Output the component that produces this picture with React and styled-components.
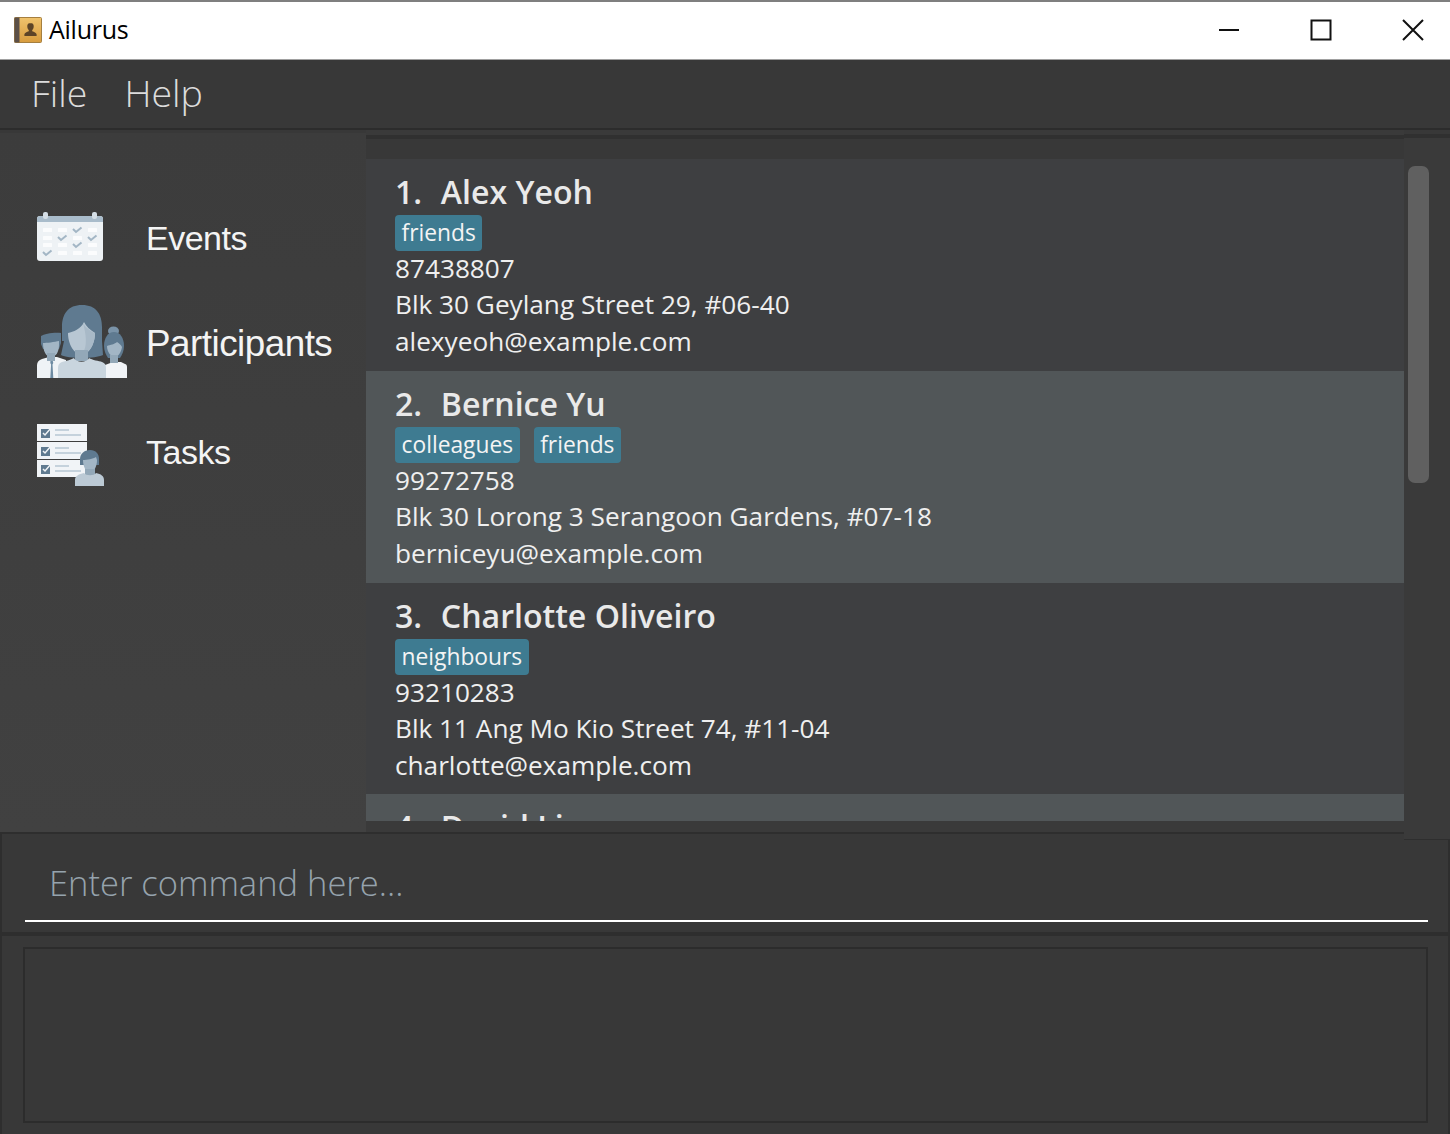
import React from "react";
import styled, { createGlobalStyle } from "styled-components";

const Global = createGlobalStyle`
  html, body { margin: 0; padding: 0; background: #383838; }
  * { box-sizing: border-box; }
`;
const Win = styled.div`
  width: 1450px; height: 1134px; display: flex; flex-direction: column; overflow: hidden;
  background: #383838; font-family: "Open Sans", sans-serif;
`;
const TitleBar = styled.div`
  height: 60px; flex: none; background: #fff; border-top: 2px solid #7f7f7f; border-bottom: 1px solid #a0a0a0;
  display: flex; align-items: center; padding: 0 26px 1px 14px; gap: 70px;
`;
const AppName = styled.div`
  font-size: 25px; color: #000; margin-left: -63px; flex: 1; letter-spacing: -.25px; padding-bottom: 2px;
`;
const WinBtn = styled.div`
  width: 22px; height: 100%; display: flex; align-items: center; justify-content: center;
`;
const MenuBar = styled.div`
  height: 70px; flex: none; background: #383838; border-bottom: 2px solid #2c2c2c;
  display: flex; align-items: center; gap: 37px; padding: 0 0 3px 31px;
`;
const MenuItem = styled.div`
  color: #dcdcdc; font-size: 37.5px; font-weight: 300;
`;
const Main = styled.div`
  flex: none; height: 702px; display: flex; background: #383838;
`;
const Sidebar = styled.div`
  width: 366px; flex: none; background: linear-gradient(#3c3c3c, #414141); margin-top: 3px;
  padding: 51px 0 0 36px; display: flex; flex-direction: column;
`;
const NavItem = styled.div`
  height: ${p => p.$h}px; display: flex; align-items: center;
  & > svg { flex: none; }
`;
const NavLabel = styled.div`
  margin-left: ${p => p.$x}px; padding-top: 4px;
  font-family: "Liberation Sans", Arial, sans-serif; font-size: ${p => p.$size}px; color: #f4f4f4; letter-spacing: -.5px;
`;
const ListPanel = styled.div`
  flex: 1; min-width: 0; display: flex; flex-direction: column; padding-bottom: 11px;
  background: #3a3a3a;
`;
const ListTop = styled.div`
  height: 24px; flex: none; background: #383838; border-top: 4px solid #303030; margin-top: 5px;
`;
const List = styled.div`
  flex: 1; min-height: 0; overflow: hidden;
`;
const Card = styled.div`
  height: ${p => p.$h}px; padding: 11px 0 0 29px; background: ${p => p.$alt ? "#515658" : "#3e3f41"};
  color: #efefef; overflow: hidden;
`;
const Name = styled.div`
  font-size: 32.1px; font-weight: 600; line-height: 44px; color: #e9e9e9; white-space: pre; margin-bottom: 1px;
`;
const Index = styled.span`
  margin-right: 2px;
`;
const Tags = styled.div`
  display: flex; gap: 14px; height: 36px; margin-bottom: -1px;
`;
const Tag = styled.span`
  background: #3e7b91; color: #f4f4f4; font-size: 22.8px; border-radius: 4px;
  padding: 0 6.5px; height: 36px; line-height: 35px;
`;
const Detail = styled.div`
  font-size: 26.2px; line-height: 36.3px; color: #efefef; white-space: pre;
`;
const Track = styled.div`
  width: 46px; flex: none; background: #3a3a3a; border-top: 4px solid #303030; margin: 4px 0 -8px; padding: 28px 0 0 4px;
  border-bottom: 1px solid #2e2e2e; position: relative; z-index: 2;
`;
const Thumb = styled.div`
  width: 21px; height: 317px; border-radius: 7px; background: #606060;
`;
const CommandBox = styled.div`
  height: 104px; flex: none; background: #383838; border-top: 2px solid #2e2e2e; border-bottom: 4px solid #2e2e2e;
  border-left: 2px solid #2e2e2e; border-right: 2px solid #2e2e2e;
  padding: 0 20px 0 23px;
`;
const Command = styled.div`
  height: 88px; border-bottom: 2px solid #fff;
  color: #96a3ad; font-size: 34.5px; font-weight: 300; padding: 27px 0 0 24px; line-height: 44px;
`;
const ResultWrap = styled.div`
  flex: 1; min-height: 0; padding: 11px 20px 11px 21px; border-left: 2px solid #2e2e2e; border-right: 2px solid #2e2e2e;
`;
const Result = styled.div`
  height: 100%; border: 2px solid #2c2c2c; background: #383838;
`;

const BookIcon = () => (
  <svg width="28" height="27" viewBox="0 0 28 27">
    <defs>
      <linearGradient id="cover" x1="0" y1="0" x2="0" y2="1">
        <stop offset="0" stopColor="#f0c36d" />
        <stop offset="1" stopColor="#d89c3e" />
      </linearGradient>
    </defs>
    <rect x="0.5" y="0.5" width="27" height="25" rx="1" fill="url(#cover)" stroke="#a57f3f" />
    <rect x="0.5" y="0.5" width="5" height="25" fill="#5c5048" />
    <path d="M16.5 6c-2.4 0-3.4 1.7-3.2 3.7.1 1.4.7 2.6 1.5 3.2v1.3c-2 .8-4 1.3-4.4 3v1.8h12.2v-1.8c-.4-1.7-2.4-2.2-4.4-3v-1.3c.8-.6 1.4-1.8 1.5-3.2.2-2-.8-3.7-3.2-3.7Z" fill="#5d4427" />
  </svg>
);
const Minimize = () => <svg width="22" height="4" viewBox="0 0 22 4"><path d="M1 2h20" stroke="#111" strokeWidth="2" /></svg>;
const Maximize = () => <svg width="22" height="22" viewBox="0 0 22 22"><rect x="1.5" y="1.5" width="19" height="19" fill="none" stroke="#111" strokeWidth="2" /></svg>;
const CloseIcon = () => <svg width="22" height="22" viewBox="0 0 22 22"><path d="M1 1l20 20M21 1L1 21" stroke="#111" strokeWidth="2" /></svg>;

const CalIcon = () => {
  const cols = [7, 22, 37, 52];
  const rows = [16, 24, 31, 39];
  const checks = [[2, 0], [1, 1], [3, 1], [2, 2], [0, 3]];
  return (
    <svg width="68" height="50" viewBox="0 0 68 50">
      <rect x="1" y="4" width="66" height="45" rx="3" fill="#eef2f5" />
      <path d="M1 10V7a3 3 0 0 1 3-3h60a3 3 0 0 1 3 3v3Z" fill="#a9bccb" />
      <rect x="7" y="0" width="5" height="7" rx="2" fill="#d5dfe7" />
      <rect x="56" y="0" width="5" height="7" rx="2" fill="#d5dfe7" />
      {rows.map((y, r) => cols.map((x, c) =>
        checks.some(k => k[0] === c && k[1] === r)
          ? <path key={`${r}${c}`} d={`M${x} ${y + 1}l3 3 5.5-4.5`} fill="none" stroke="#a3b6c5" strokeWidth="2" />
          : <rect key={`${r}${c}`} x={x} y={y} width="9" height="4" rx="0.5" fill="#fbfcfd" />
      ))}
    </svg>
  );
};
const PeopleIcon = () => (
  <svg width="92" height="74" viewBox="0 0 92 74">
    <path d="M1 60c0-3 2-5 5-6l7-2h8l9 3v18H1Z" fill="#eff3f6" />
    <path d="M14.500 55h2l.8 3-.8 1.500.8 13.500h-3l.8-13.500-.8-1.500Z" fill="#6d8ba2" />
    <path d="M5 31c3-2 13-4 20-3v10l-2 6H7l-2-5Z" fill="#5f7a90" />
    <path d="M7 38c3 0 12-1 16-2v4c0 7-3 12-8 12s-8-6-8-14Z" fill="#a3b6c5" />
    <path d="M11 48h8v8h-8Z" fill="#93a8b8" />
    <path d="M69 60l8-3h8l4 2c1 0 2 1 2 3v11H69Z" fill="#f1f4f7" />
    <ellipse cx="77.500" cy="26" rx="5.500" ry="4.500" fill="#7a93a8" />
    <path d="M68 41c0-8 4-14 10-14s10 6 10 14c0 5-2 9-4 12H72c-2-3-4-7-4-12Z" fill="#5f7a90" />
    <path d="M71 41c3-1 8-2 10-4 2 1 4 3 5 5-1 6-4 10-7.500 10S71 47 71 41Z" fill="#a3b6c5" />
    <path d="M74 50h8v8h-8Z" fill="#93a8b8" />
    <path d="M46 0c14 0 20 9 20 22v14l1 14c-5 2-11 3-21 3s-17-1-21-3l3-14 -2 0 0-14C26 9 32 0 46 0Z" fill="#5f7a90" />
    <path d="M32 28c5-1 13-4 16-11 2 4 6 8 11 11 0 10-5 21-13.500 21S32 38 32 28Z" fill="#b8c7d3" />
    <path d="M47 18c2 4 7 8 12 10 0 10-5 21-13 21 6-7 4-20 1-31Z" fill="#a8b9c7" />
    <path d="M39 45h13v11H39Z" fill="#93a8b8" />
    <path d="M38 53c-3 2-9 3-12 4-3 1-4 3-4 6v10h48v-10c0-3-1-5-4-6-3-1-10-2-13-4-2 5-13 5-15 0Z" fill="#c9d5de" />
  </svg>
);
const TaskRow = ({ y }) => (
  <g>
    <rect x="1" y={y} width="50" height="17" fill="#f1f4f7" />
    <rect x="5" y={y + 5} width="9" height="9" fill="#5f7a90" />
    <path d={`M7 ${y + 9}l2 2 6-7`} stroke="#f1f4f7" strokeWidth="1.500" fill="none" />
    <rect x="19" y={y + 5} width="14" height="2" fill="#c5d2dc" />
    <rect x="19" y={y + 10} width="26" height="2" fill="#c5d2dc" />
  </g>
);
const TasksIcon = () => (
  <svg width="68" height="72" viewBox="0 -10 68 72">
    <TaskRow y={0} />
    <TaskRow y={18} />
    <TaskRow y={36} />
    <path d="M54 26c6 0 9 4 9 9v6H44v-6c0-5 4-9 10-9Z" fill="#5f7a90" />
    <path d="M47 36c4 0 10-1 13-3l1 3c0 7-3 12-7 12s-7-5-7-12Z" fill="#a3b6c5" />
    <path d="M49 45h10v7H49Z" fill="#93a8b8" />
    <path d="M48 49c2 3 10 3 12 0 5 1 8 3 8 7v6H39v-6c0-4 4-6 9-7Z" fill="#bccad5" />
  </svg>
);

const people = [
  { no: "1.", name: "Alex Yeoh", tags: ["friends"], phone: "87438807", addr: "Blk 30 Geylang Street 29, #06-40", email: "alexyeoh@example.com", h: 212 },
  { no: "2.", name: "Bernice Yu", tags: ["colleagues", "friends"], phone: "99272758", addr: "Blk 30 Lorong 3 Serangoon Gardens, #07-18", email: "berniceyu@example.com", h: 212, alt: true },
  { no: "3.", name: "Charlotte Oliveiro", tags: ["neighbours"], phone: "93210283", addr: "Blk 11 Ang Mo Kio Street 74, #11-04", email: "charlotte@example.com", h: 211 },
  { no: "4.", name: "David Li", tags: [], phone: "", addr: "", email: "", h: 212, alt: true },
];

export default function App() {
  return (
    <Win>
      <Global />
      <TitleBar>
        <BookIcon />
        <AppName>Ailurus</AppName>
        <WinBtn><Minimize /></WinBtn>
        <WinBtn><Maximize /></WinBtn>
        <WinBtn><CloseIcon /></WinBtn>
      </TitleBar>
      <MenuBar>
        <MenuItem>File</MenuItem>
        <MenuItem>Help</MenuItem>
      </MenuBar>
      <Main>
        <Sidebar>
          <NavItem $h={105}><CalIcon /><NavLabel $x={42} $size={34}>Events</NavLabel></NavItem>
          <NavItem $h={105}><PeopleIcon /><NavLabel $x={18} $size={36.8}>Participants</NavLabel></NavItem>
          <NavItem $h={112}><TasksIcon /><NavLabel $x={42} $size={34}>Tasks</NavLabel></NavItem>
        </Sidebar>
        <ListPanel>
          <ListTop />
          <List>
            {people.map(p => (
              <Card key={p.no} $h={p.h} $alt={p.alt}>
                <Name><Index>{p.no}  </Index>{p.name}</Name>
                <Tags>{p.tags.map(t => <Tag key={t}>{t}</Tag>)}</Tags>
                <Detail>{p.phone}</Detail>
                <Detail>{p.addr}</Detail>
                <Detail>{p.email}</Detail>
              </Card>
            ))}
          </List>
        </ListPanel>
        <Track><Thumb /></Track>
      </Main>
      <CommandBox>
        <Command>Enter command here...</Command>
      </CommandBox>
      <ResultWrap><Result /></ResultWrap>
    </Win>
  );
}
